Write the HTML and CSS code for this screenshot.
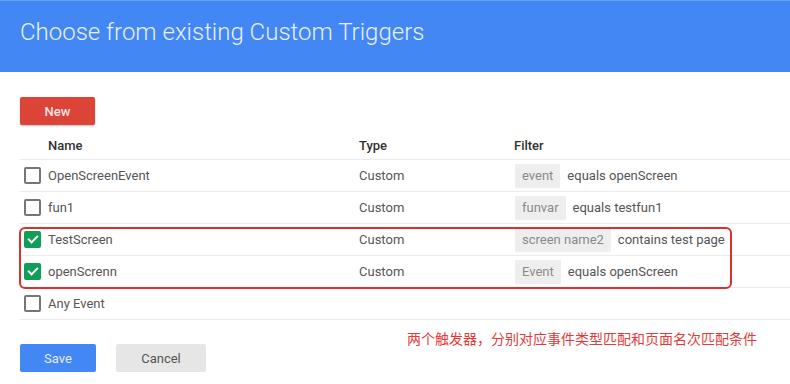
FILE: index.html
```html
<!DOCTYPE html>
<html lang="en">
<head>
  <meta charset="UTF-8">
  <title>Choose from existing Custom Triggers</title>
  <link rel="stylesheet" href="styles.css">
</head>
<body>
  <header class="dialog-header">
    <h1>Choose from existing Custom Triggers</h1>
  </header>
  <main class="dialog-body">
    <button class="btn btn-new">New</button>

    <div class="trigger-table">
      <div class="row row-head">
        <div class="cell cell-name">Name</div>
        <div class="cell">Type</div>
        <div class="cell">Filter</div>
      </div>
      <div class="row">
        <div class="cell cell-name"><span class="check"></span>OpenScreenEvent</div>
        <div class="cell">Custom</div>
        <div class="cell"><span class="chip">event</span>equals openScreen</div>
      </div>
      <div class="row">
        <div class="cell cell-name"><span class="check"></span>fun1</div>
        <div class="cell">Custom</div>
        <div class="cell"><span class="chip">funvar</span>equals testfun1</div>
      </div>
      <div class="highlight">
        <div class="row">
          <div class="cell cell-name"><span class="check checked"></span>TestScreen</div>
          <div class="cell">Custom</div>
          <div class="cell"><span class="chip">screen name2</span>contains test page</div>
        </div>
        <div class="row">
          <div class="cell cell-name"><span class="check checked"></span>openScrenn</div>
          <div class="cell">Custom</div>
          <div class="cell"><span class="chip">Event</span>equals openScreen</div>
        </div>
      </div>
      <div class="row">
        <div class="cell cell-name"><span class="check"></span>Any Event</div>
        <div class="cell"></div>
        <div class="cell"></div>
      </div>
    </div>

    <p class="note">两个触发器，分别对应事件类型匹配和页面名次匹配条件</p>

    <div class="actions">
      <button class="btn btn-save">Save</button>
      <button class="btn btn-cancel">Cancel</button>
    </div>
  </main>
</body>
</html>
```

FILE: styles.css
```css
body {
  margin: 0;
  font-family: Roboto, 'Liberation Sans', sans-serif;
  background: #fff;
  color: #555;
}

.dialog-header {
  background: #4287f4;
  height: 72px;
  padding: 0 20px;
  box-sizing: border-box;
  border-top: 1px solid #6a9ff6;
}

.dialog-header h1 {
  margin: 0;
  padding-top: 16px;
  font-size: 24px;
  font-weight: 300;
  line-height: 30px;
  color: #e8f0fe;
}

.dialog-body {
  position: relative;
  padding: 25px 0 0 20px;
}

.btn {
  display: block;
  height: 28px;
  border: none;
  border-radius: 2px;
  font-family: inherit;
  font-size: 13px;
  padding: 0;
  cursor: pointer;
}

.btn-new {
  width: 75px;
  background: #dc4437;
  color: #fbe5e3;
  font-weight: 500;
  box-shadow: 0 1px 2px rgba(0, 0, 0, 0.25);
}

.trigger-table {
  margin-top: 6px;
  font-size: 13px;
}

.row {
  display: grid;
  grid-template-columns: 339px 155px 1fr;
  height: 32px;
  border-bottom: 1px solid #ebebeb;
  box-sizing: border-box;
  align-items: center;
}

.row-head {
  height: 29px;
  font-weight: 500;
  color: #333;
}

.cell {
  display: flex;
  align-items: center;
  white-space: nowrap;
}

.cell-name {
  padding-left: 28px;
}

.row .cell-name .check {
  margin-left: -24px;
}

.check {
  width: 17px;
  height: 17px;
  box-sizing: border-box;
  border: 2px solid #767676;
  border-radius: 2px;
  margin-right: 7px;
  flex: none;
  position: relative;
}

.check.checked {
  background: #0f9d58;
  border-color: #0f9d58;
}

.check.checked::after {
  content: "";
  position: absolute;
  left: 4px;
  top: 0px;
  width: 4px;
  height: 8px;
  border: solid #fff;
  border-width: 0 2px 2px 0;
  transform: rotate(45deg);
}

.chip {
  background: #eeeeee;
  color: #8a8a8a;
  height: 24px;
  line-height: 24px;
  padding: 0 7px;
  margin-left: 1px;
  margin-right: 7px;
  border-radius: 2px;
}

.highlight {
  position: relative;
}

.highlight::after {
  content: "";
  position: absolute;
  top: 3px;
  bottom: -1px;
  left: -1px;
  right: 58px;
  border: 2px solid #dc2f2f;
  border-radius: 6px;
  pointer-events: none;
}

.note {
  position: absolute;
  left: 407px;
  top: 256px;
  margin: 0;
  font-family: Roboto, 'Noto Sans CJK SC', sans-serif;
  font-size: 14px;
  color: #e23a3a;
}

.actions {
  display: flex;
  gap: 20px;
  margin-top: 24px;
}

.btn-save {
  width: 76px;
  background: #4287f4;
  color: #e3ecfd;
}

.btn-cancel {
  width: 90px;
  background: #e6e6e6;
  color: #555;
}
```
